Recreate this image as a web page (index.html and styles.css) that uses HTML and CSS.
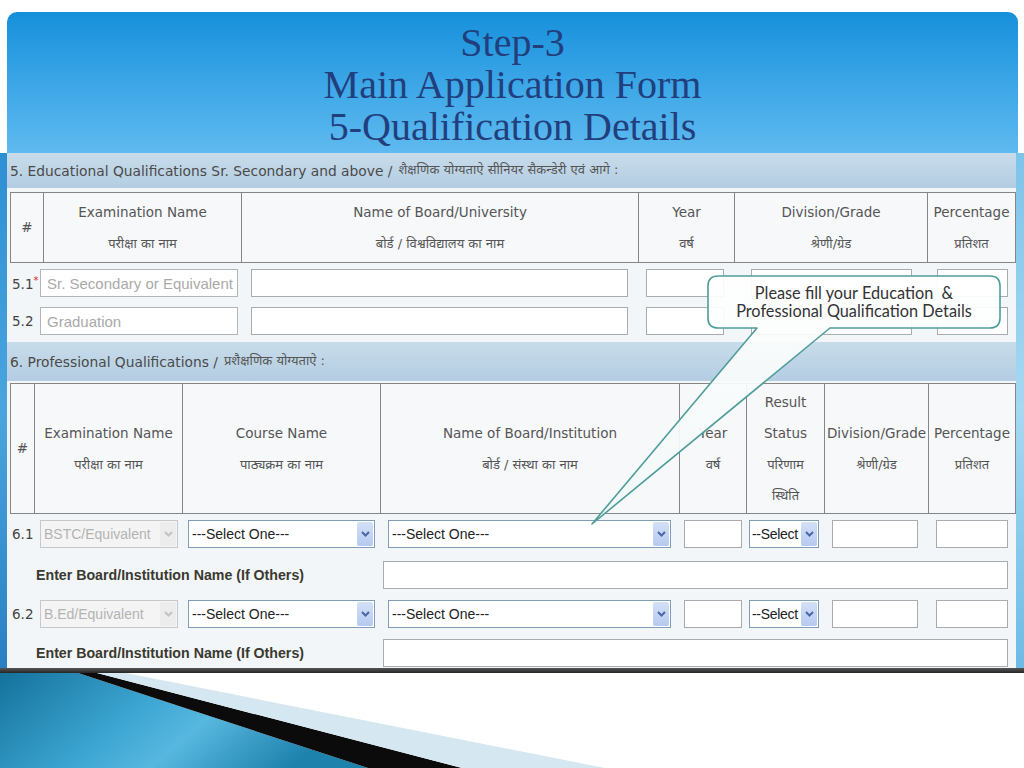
FILE: index.html
```html
<!DOCTYPE html>
<html lang="hi">
<head>
<meta charset="utf-8">
<title>Step-3 Main Application Form</title>
<link rel="stylesheet" href="styles.css">
</head>
<body>
<div class="slide">
  <header class="title">
    <div>Step-3</div>
    <div>Main Application Form</div>
    <div>5-Qualification Details</div>
  </header>

  <section class="shot">
    <div class="edge-l"></div>
    <div class="inner">
      <div class="band">5. Educational Qualifications Sr. Secondary and above /<span class="hi band-hi">शैक्षणिक योग्यताऐ सीनियर सैकन्डेरी एवं आगे :</span></div>

      <table class="grid t5">
        <colgroup>
          <col class="c5-num"><col class="c5-exam"><col class="c5-board"><col class="c5-year"><col class="c5-div"><col class="c5-pct">
        </colgroup>
        <tr>
          <td>#</td>
          <td>Examination Name<br><span class="hi">परीक्षा का नाम</span></td>
          <td>Name of Board/University<br><span class="hi">बोर्ड / विश्वविद्यालय का नाम</span></td>
          <td>Year<br><span class="hi">वर्ष</span></td>
          <td>Division/Grade<br><span class="hi">श्रेणी/ग्रेड</span></td>
          <td>Percentage<br><span class="hi">प्रतिशत</span></td>
        </tr>
      </table>

      <div class="row r5 first">
        <span class="num">5.1<sup>*</sup></span>
        <input class="inp exam5 ph" value="Sr. Secondary or Equivalent" readonly>
        <input class="inp board5">
        <input class="inp year5">
        <input class="inp div5">
        <input class="inp pct5">
      </div>
      <div class="row r5">
        <span class="num">5.2</span>
        <input class="inp exam5 ph" value="Graduation" readonly>
        <input class="inp board5">
        <input class="inp year5">
        <input class="inp div5">
        <input class="inp pct5">
      </div>

      <div class="band band6">6. Professional Qualifications /<span class="hi band-hi">प्रशैक्षणिक योग्यताऐ :</span></div>

      <table class="grid t6">
        <colgroup>
          <col class="c6-num"><col class="c6-exam"><col class="c6-course"><col class="c6-board"><col class="c6-year"><col class="c6-res"><col class="c6-div"><col class="c6-pct">
        </colgroup>
        <tr>
          <td>#</td>
          <td>Examination Name<br><span class="hi">परीक्षा का नाम</span></td>
          <td>Course Name<br><span class="hi">पाठ्यक्रम का नाम</span></td>
          <td>Name of Board/Institution<br><span class="hi">बोर्ड / संस्था का नाम</span></td>
          <td>Year<br><span class="hi">वर्ष</span></td>
          <td>Result<br>Status<br><span class="hi">परिणाम</span><br><span class="hi">स्थिति</span></td>
          <td>Division/Grade<br><span class="hi">श्रेणी/ग्रेड</span></td>
          <td>Percentage<br><span class="hi">प्रतिशत</span></td>
        </tr>
      </table>

      <div class="row r6 first">
        <span class="num">6.1</span>
        <div class="sel disabled exam6"><span class="sel-text">BSTC/Equivalent</span><span class="arrow"><svg width="9" height="6" viewBox="0 0 9 6"><path d="M1 1 L4.5 4.5 L8 1" /></svg></span></div>
        <div class="sel course6"><span class="sel-text">---Select One---</span><span class="arrow"><svg width="9" height="6" viewBox="0 0 9 6"><path d="M1 1 L4.5 4.5 L8 1" /></svg></span></div>
        <div class="sel board6"><span class="sel-text">---Select One---</span><span class="arrow"><svg width="9" height="6" viewBox="0 0 9 6"><path d="M1 1 L4.5 4.5 L8 1" /></svg></span></div>
        <input class="inp year6">
        <div class="sel res6"><span class="sel-text">--Select</span><span class="arrow"><svg width="9" height="6" viewBox="0 0 9 6"><path d="M1 1 L4.5 4.5 L8 1" /></svg></span></div>
        <input class="inp div6">
        <input class="inp pct6">
      </div>
      <div class="row other">
        <span class="other-label">Enter Board/Institution Name (If Others)</span>
        <input class="inp other-input">
      </div>

      <div class="row r6 second">
        <span class="num">6.2</span>
        <div class="sel disabled exam6"><span class="sel-text">B.Ed/Equivalent</span><span class="arrow"><svg width="9" height="6" viewBox="0 0 9 6"><path d="M1 1 L4.5 4.5 L8 1" /></svg></span></div>
        <div class="sel course6"><span class="sel-text">---Select One---</span><span class="arrow"><svg width="9" height="6" viewBox="0 0 9 6"><path d="M1 1 L4.5 4.5 L8 1" /></svg></span></div>
        <div class="sel board6"><span class="sel-text">---Select One---</span><span class="arrow"><svg width="9" height="6" viewBox="0 0 9 6"><path d="M1 1 L4.5 4.5 L8 1" /></svg></span></div>
        <input class="inp year6">
        <div class="sel res6"><span class="sel-text">--Select</span><span class="arrow"><svg width="9" height="6" viewBox="0 0 9 6"><path d="M1 1 L4.5 4.5 L8 1" /></svg></span></div>
        <input class="inp div6">
        <input class="inp pct6">
      </div>
      <div class="row other">
        <span class="other-label">Enter Board/Institution Name (If Others)</span>
        <input class="inp other-input">
      </div>
    </div>
    <div class="edge-r"></div>
  </section>
  <div class="shot-bottom"></div>

  <svg class="deco" width="1024" height="95" viewBox="0 0 1024 95">
    <defs>
      <linearGradient id="blueg" x1="0" y1="0" x2="1" y2="0.3">
        <stop offset="0" stop-color="#14729c"/>
        <stop offset="0.45" stop-color="#3da6d2"/>
        <stop offset="0.65" stop-color="#57b7df"/>
        <stop offset="1" stop-color="#1d82ac"/>
      </linearGradient>
    </defs>
    <polygon points="0,0 78,0 368,95 0,95" fill="url(#blueg)"/>
    <polygon points="78,0 97,0 462,95 368,95" fill="#0b0b0b"/>
    <polygon points="97,0 126,0 605,95 462,95" fill="#d5e8f1"/>
  </svg>

  <svg class="callout" width="1024" height="768" viewBox="0 0 1024 768">
    <defs>
      <linearGradient id="cg" x1="0" y1="0" x2="0" y2="1">
        <stop offset="0" stop-color="#ffffff"/>
        <stop offset="1" stop-color="#f1f7f7"/>
      </linearGradient>
    </defs>
    <path d="M718,276 H990 Q1000,276 1000,286 V318 Q1000,328 990,328 H830 L592,524 L757,328 H718 Q708,328 708,318 V286 Q708,276 718,276 Z" fill="url(#cg)" fill-opacity="0.93" stroke="#4f9d9b" stroke-width="1.6" stroke-linejoin="round"/>
  </svg>
  <div class="callout-text">Please fill your Education&nbsp; &amp;<br>Professional Qualification Details</div>
</div>
</body>
</html>
```

FILE: styles.css
```css
* { box-sizing: border-box; }

body {
  margin: 0;
  background: #ffffff;
}

.slide {
  position: relative;
  width: 1024px;
  height: 768px;
  overflow: hidden;
  background: #ffffff;
  font-family: "DejaVu Sans", "Noto Sans Devanagari", "Lohit Devanagari", "FreeSans", "Noto Sans", sans-serif;
}

/* ---------- title ---------- */
.title {
  margin: 12px 6px 0 7px;
  height: 141px;
  padding-top: 10px;
  border-radius: 10px 10px 0 0;
  background: linear-gradient(#1690db, #3fa8e8 55%, #5fbaef);
  text-align: center;
  font-family: "Liberation Serif", "Times New Roman", serif;
  font-size: 40px;
  line-height: 42px;
  color: #213f7d;
}

/* ---------- screenshot area ---------- */
.shot {
  display: flex;
  height: 515px;
}

.edge-l {
  width: 7px;
  background: linear-gradient(#2e8fd2, #4aa5df 50%, #2a7fc2);
}

.edge-r {
  width: 8px;
  background: linear-gradient(#7cc4ea, #a6d9f2 50%, #6cbbe6);
}

.inner {
  flex: 1;
  background: #f3f6f9;
  overflow: hidden;
}

.band {
  height: 35px;
  padding-left: 3px;
  display: flex;
  align-items: center;
  background: linear-gradient(#c8dcea, #b4cde2);
  font-size: 13.8px;
  color: #4a4a4a;
  white-space: nowrap;
}

.band6 {
  height: 39px;
  margin-top: 7px;
}

.hi {
  font-size: 13px;
  color: #555;
}

.band-hi {
  margin-left: 6px;
}

/* ---------- header tables ---------- */
.grid {
  margin: 4px 0 0 3px;
  width: 1005px;
  border-collapse: collapse;
  table-layout: fixed;
  background: #f6f8fa;
}

.grid td {
  border: 1px solid #858585;
  padding: 0;
  text-align: center;
  vertical-align: middle;
  font-size: 13.5px;
  line-height: 31px;
  color: #555;
  white-space: nowrap;
  overflow: hidden;
}

.t5 td { height: 70px; }

.t6 { margin-top: 2px; }
.t6 td { height: 130px; }

.c5-num { width: 33px; }
.c5-exam { width: 198px; }
.c5-board { width: 397px; }
.c5-year { width: 96px; }
.c5-div { width: 193px; }
.c5-pct { width: 88px; }

.c6-num { width: 24px; }
.c6-exam { width: 148px; }
.c6-course { width: 198px; }
.c6-board { width: 299px; }
.c6-year { width: 67px; }
.c6-res { width: 78px; }
.c6-div { width: 104px; }
.c6-pct { width: 87px; }

/* ---------- rows ---------- */
.row {
  display: flex;
  align-items: center;
  height: 28px;
  margin-top: 10px;
  padding-left: 5px;
}

.row.first { margin-top: 6px; }
.row.second { margin-top: 11px; }
.row.other { margin-top: 13px; padding-left: 29px; }
.row.second + .other { margin-top: 11px; }

.num {
  width: 28px;
  font-size: 13.5px;
  color: #444;
  white-space: nowrap;
}

.num sup {
  color: #d22;
  font-size: 10px;
  vertical-align: 5px;
}

.inp {
  height: 28px;
  margin: 0;
  border: 1px solid #a8acb0;
  background: #ffffff;
  padding: 0 0 0 5px;
  font-family: "Liberation Sans", Arial, sans-serif;
  font-size: 14.5px;
  color: #333;
  outline: none;
}

.inp.ph {
  color: #a9a9a9;
  border-color: #b3b6b9;
  font-size: 15px;
  padding-left: 6px;
}

.exam5 { width: 198px; }
.board5 { width: 377px; margin-left: 13px; }
.year5 { width: 78px; margin-left: 18px; }
.div5 { width: 161px; margin-left: 27px; }
.pct5 { width: 71px; margin-left: 25px; }

/* custom selects */
.sel {
  height: 28px;
  border: 1px solid #7f9db9;
  background: #ffffff;
  display: flex;
  align-items: center;
  padding: 1px 1px 1px 3px;
  font-family: "Liberation Sans", Arial, sans-serif;
  font-size: 14px;
  color: #222;
  overflow: hidden;
}

.sel-text {
  flex: 1;
  white-space: nowrap;
  overflow: hidden;
}

.arrow {
  flex: none;
  width: 16px;
  height: 100%;
  display: flex;
  align-items: center;
  justify-content: center;
  background: linear-gradient(#d3e0f7, #b6caf0);
  border-radius: 2px;
}

.arrow path {
  fill: none;
  stroke: #4a67a8;
  stroke-width: 2;
}

.sel.disabled {
  border-color: #c6c9cc;
  background: #f4f4f4;
  color: #b3b3b3;
}

.sel.disabled .arrow {
  background: #ececec;
}

.sel.disabled .arrow path {
  stroke: #c3c3c3;
}

.exam6 { width: 138px; }
.course6 { width: 187px; margin-left: 10px; }
.board6 { width: 283px; margin-left: 13px; }
.year6 { width: 58px; margin-left: 13px; }
.res6 { width: 70px; margin-left: 7px; padding-left: 2px; }
.res6 .sel-text { letter-spacing: -0.3px; }
.div6 { width: 86px; margin-left: 13px; }
.pct6 { width: 72px; margin-left: 18px; }

.other-label {
  width: 347px;
  font-family: "Liberation Sans", Arial, sans-serif;
  font-weight: bold;
  font-size: 14.2px;
  color: #3a3a30;
  white-space: nowrap;
}

.other-input { width: 625px; }

.shot-bottom {
  height: 5px;
  background: linear-gradient(#555555, #262626);
}

/* ---------- decoration ---------- */
.deco {
  display: block;
}

/* ---------- callout overlay ---------- */
.callout {
  position: absolute;
  left: 0;
  top: 0;
  pointer-events: none;
}

.callout-text {
  position: absolute;
  left: 708px;
  top: 276px;
  width: 292px;
  height: 52px;
  padding-top: 8px;
  text-align: center;
  font-family: Lato, "Open Sans", sans-serif;
  font-size: 16.3px;
  line-height: 18px;
  color: #333;
}
```
